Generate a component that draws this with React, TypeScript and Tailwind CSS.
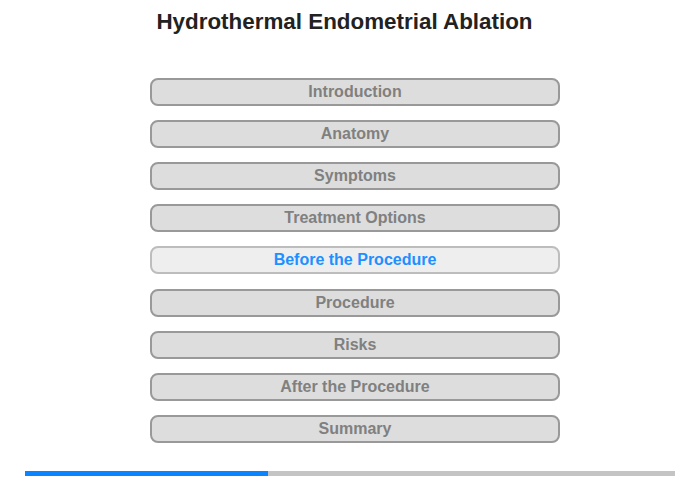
const items = [
  'Introduction',
  'Anatomy',
  'Symptoms',
  'Treatment Options',
  'Before the Procedure',
  'Procedure',
  'Risks',
  'After the Procedure',
  'Summary',
];

const active = 'Before the Procedure';

export default function App() {
  return (
    <div className="h-[480px] w-[700px] bg-white font-['Liberation_Sans',Arial,sans-serif]">
      <h1 className="pt-[9px] pr-[11px] text-center text-[22.4px] leading-[26px] font-bold text-[#222]">
        Hydrothermal Endometrial Ablation
      </h1>

      <nav className="mt-[42.8px] ml-[150px] flex w-[410px] flex-col gap-[14.15px]">
        {items.map((label) => {
          const isActive = label === active;
          return (
            <button
              key={label}
              className={
                isActive
                  ? 'h-[28px] rounded-[8px] border-2 border-[#bdbdbd] bg-[#eeeeee] text-[16px] leading-[24px] font-bold text-[#1e90ff]'
                  : 'h-[28px] rounded-[8px] border-2 border-[#999999] bg-[#dddddd] text-[16px] leading-[24px] font-bold text-[#808080]'
              }
            >
              {label}
            </button>
          );
        })}
      </nav>

      <div className="mx-[25px] mt-[28px] flex h-[5px]">
        <div className="w-[243px] bg-[#0a84ff]" />
        <div className="flex-1 bg-[#c4c4c4]" />
      </div>
    </div>
  );
}
